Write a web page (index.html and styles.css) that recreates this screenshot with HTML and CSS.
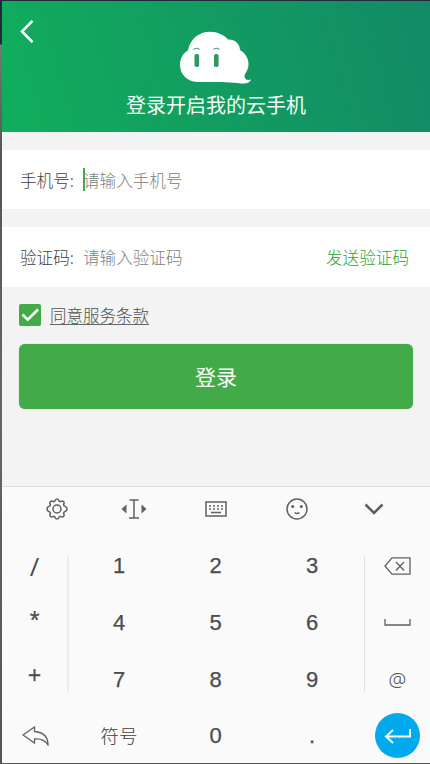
FILE: index.html
```html
<!DOCTYPE html>
<html lang="zh-CN">
<head>
<meta charset="utf-8">
<title>登录</title>
<link rel="stylesheet" href="styles.css">
</head>
<body>
<div class="screen">
  <header class="hero">
    <svg class="back" width="15" height="25" viewBox="0 0 15 25"><path d="M13.500 1.800 3 12.500l10.500 10.700"/></svg>
    <svg class="cloud" width="74" height="54" viewBox="0 0 74 54">
      <path class="cloud-body" d="M18 51C8 50.500 1 43 1 34 1 27.500 4 22 9 19.500 11 8 20 .8 31 .8c7.500 0 14 3.200 18 7.700 6.500-.5 12 4.500 12 10.500 5 3 8.500 8 8.500 14 0 7-4 9-4 12.500 0 3 3 4 6.500 3-.8 3-4.500 4.500-10 4C53 51.200 42 51 28 51Z"/>
      <path class="cloud-brow" d="M14.500 18.500q3.200-2.500 6 0M34.500 18.500q3.200-2.500 6 0"/>
      <rect class="cloud-eye" x="15.500" y="23" width="4.600" height="13" rx="1.800"/>
      <rect class="cloud-eye" x="35" y="23" width="4.600" height="13" rx="1.800"/>
    </svg>
    <h1 class="title">登录开启我的云手机</h1>
  </header>
  <main class="form">
    <div class="field phone"><span class="label">手机号:</span><span class="caret"></span><span class="hint">请输入手机号</span></div>
    <div class="field code"><span class="label">验证码:</span><span class="hint">请输入验证码</span><span class="send">发送验证码</span></div>
    <div class="terms">
      <span class="check"><svg width="22" height="22" viewBox="0 0 22 22"><path d="m3.500 10.500 5.200 5.200L19 5.500"/></svg></span>
      <span class="terms-text">同意服务条款</span>
    </div>
    <div class="login">登录</div>
  </main>
  <section class="keyboard">
    <div class="tools">
      <svg width="22" height="22" viewBox="0 0 22 22"><path d="M11 1c1.700 0 1.800.6 2.200 2.200l1.200.5c1.500-.9 2.200-1.100 3.100-.1s.9 1.700.1 3.100l.5 1.200C20 8.600 21 9.200 21 11s-1 2.400-2.900 3.100l-.5 1.200c.8 1.400.8 2.200-.1 3.100s-1.600.8-3.100-.1l-1.200.5C12.800 20.400 12.700 21 11 21s-1.800-.6-2.200-2.200l-1.200-.5c-1.500.9-2.200 1-3.100.1s-.9-1.700-.1-3.100l-.5-1.200C2 13.400 1 12.800 1 11s1-2.400 2.900-3.100l.5-1.200c-.8-1.400-.8-2.200.1-3.100s1.600-.8 3.100.1l1.200-.5C9.200 1.600 9.300 1 11 1Z"/><circle cx="11" cy="11" r="4"/></svg>
      <svg width="26" height="20" viewBox="0 0 26 20"><path d="M8.500 1h9M13 1v18M8 19h10"/><path class="solid" d="M5.500 5.500v9L.5 10ZM20.500 5.500v9l5-4.500Z"/></svg>
      <svg width="22" height="16" viewBox="0 0 22 16"><path d="M1 1h20v14H1Z"/><path class="dots" d="M4 5h14M4 8h14"/><path d="M6 11.500h10"/></svg>
      <svg width="22" height="22" viewBox="0 0 22 22"><circle cx="11" cy="11" r="10"/><circle class="solid" cx="6.700" cy="8.500" r="1.500"/><circle class="solid" cx="15.300" cy="8.500" r="1.500"/><path d="M8.500 14.500q2.500 2 5 0"/></svg>
      <svg class="down" width="20" height="12" viewBox="0 0 20 12"><path d="m1.500 1.500 8.500 8.500 8.500-8.500"/></svg>
    </div>
    <div class="keys">
      <span class="key side slash">/</span><span class="key">1</span><span class="key">2</span><span class="key">3</span>
      <span class="key end"><svg width="27" height="18" viewBox="0 0 27 18"><path d="M8 .8h18v16.400H8L1 9ZM12 5l8 8.500M20 5l-8 8.500"/></svg></span>
      <span class="key side star">*</span><span class="key">4</span><span class="key">5</span><span class="key">6</span>
      <span class="key end"><svg width="27" height="7" viewBox="0 0 27 7"><path d="M1 0v6h25V0"/></svg></span>
      <span class="key side plus">+</span><span class="key">7</span><span class="key">8</span><span class="key">9</span>
      <span class="key end at">@</span>
    </div>
    <div class="keys-last">
      <span class="key undo"><svg width="27" height="20" viewBox="0 0 27 20"><path d="M1 9 12.500 1v4.500C20 6 26 10 26 19c-3-5-7-6.500-13.500-6V17Z"/></svg></span>
      <span class="key symbols">符号</span><span class="key">0</span><span class="key">.</span>
      <span class="key end last"><span class="enter"><svg width="28" height="16" viewBox="0 0 28 16"><path d="M26 1v7.500H2M9 2 2 8.500 9 15"/></svg></span></span>
    </div>
  </section>
</div>
</body>
</html>
```
FILE: styles.css
```css
* { box-sizing: border-box; }
body {
  margin: 0;
  width: 430px;
  height: 764px;
  padding: 1px 0 1px 2px;
  overflow: hidden;
  background: linear-gradient(#1d2b3b 0 44px, #777 45px, #555 160px, #666 400px, #555);
  font-family: "Noto Sans CJK SC", sans-serif;
}
svg { display: block; fill: none; }
.screen { height: 762px; display: flex; flex-direction: column; background: #f3f3f3; }
.hero {
  position: relative;
  height: 131px;
  display: flex;
  flex-direction: column;
  align-items: center;
  padding-top: 30px;
  background: linear-gradient(75deg, #11ae5c, #129a62 55%, #138a66);
}
.back { position: absolute; left: 17px; top: 18px; stroke: #fff; stroke-width: 2.6; }
.cloud { flex: none; margin-right: 1px; }
.cloud-body { fill: #fff; }
.cloud-brow { stroke: #4ba779; stroke-width: 1.1; }
.cloud-eye { fill: #35965f; }
.title { margin: 5px 0 0; font-size: 20px; line-height: 30px; font-weight: 400; color: #f4fbf7; }
.form { flex: 1; padding-top: 18px; }
.field {
  display: flex;
  align-items: center;
  padding: 0 21px 0 18px;
  background: #fff;
  font-size: 16.6px;
  font-weight: 300;
}
.phone { height: 59px; margin-bottom: 18px; }
.code { height: 60px; }
.label { width: 63px; color: #404040; }
.hint { color: #808080; }
.caret { width: 2px; height: 23px; margin-right: -2px; margin-top: -1px; background: #42ab48; }
.send { margin-left: auto; color: #2b9f32; }
.terms { display: flex; align-items: center; gap: 9px; height: 22px; margin: 17px 0 0 17px; }
.check { width: 22px; height: 22px; border-radius: 2px; background: #42ab48; }
.check svg { stroke: #fff; stroke-width: 2.5; }
.terms-text { height: 19px; line-height: 19px; border-bottom: 1px solid #666; font-size: 16.5px; font-weight: 300; color: #505050; }
.login {
  height: 65px;
  margin: 18px 17px 0;
  border-radius: 6px;
  background: #42ab48;
  box-shadow: 0 0 1px #78a87b;
  color: #fff;
  font-size: 21px;
  line-height: 65px;
  text-align: center;
}
.keyboard { height: 277px; border-top: 1px solid #dcdcdc; background: #fafafa; }
.tools {
  display: grid;
  grid-template-columns: 82px 72px 91px 72px 82px;
  place-items: center;
  height: 44px;
  padding-left: 14px;
}
.tools svg, .key svg { stroke: #606060; stroke-width: 1.5; }
.tools .solid { fill: #606060; stroke: none; }
.tools .dots { stroke-dasharray: 2 2; }
.tools .down { stroke-width: 2.6; }
.keys, .keys-last {
  position: relative;
  display: grid;
  grid-template-columns: 69px 96px 97px 96px 70px;
}
.keys { height: 171px; margin-top: 7px; grid-template-rows: 56px 57px 58px; }
.keys::before, .keys::after {
  content: "";
  position: absolute;
  top: 18px;
  height: 136px;
  width: 1px;
  background: #e0e0e0;
}
.keys::before { left: 65px; width: 2px; background: #ececec; }
.keys::after { left: 362px; }
.keys-last { grid-auto-rows: 54px; }
.key {
  display: flex;
  align-items: center;
  justify-content: center;
  font-family: "Liberation Sans", sans-serif;
  font-size: 22px;
  color: #4c4c4c;
  -webkit-text-stroke: .25px #4c4c4c;
}
.side { padding-right: 4px; }
.slash { font-size: 26px; font-family: "Open Sans", "Liberation Sans", sans-serif; padding-bottom: 1px; -webkit-text-stroke: 0; }
.star { font-size: 25px; padding-bottom: 4px; }
.plus { font-size: 23px; padding-bottom: 10px; }
.undo { padding-right: 3px; }
.key.symbols { font-family: "Noto Sans CJK SC", sans-serif; font-size: 18.5px; font-weight: 300; color: #404040; padding-bottom: 2px; -webkit-text-stroke: 0; }
.key.at { font-family: "Noto Sans", sans-serif; font-size: 20px; font-weight: 300; color: #505050; padding-bottom: 2px; -webkit-text-stroke: 0; }
.key svg { stroke-width: 1.3; }
.end { padding-left: 5px; }
.last { padding-bottom: 1px; }
.enter {
  flex: none;
  display: flex;
  align-items: center;
  justify-content: center;
  width: 45px;
  height: 45px;
  border-radius: 50%;
  background: #00aaec;
}
.enter svg { stroke: #fff; stroke-width: 2; }
```
